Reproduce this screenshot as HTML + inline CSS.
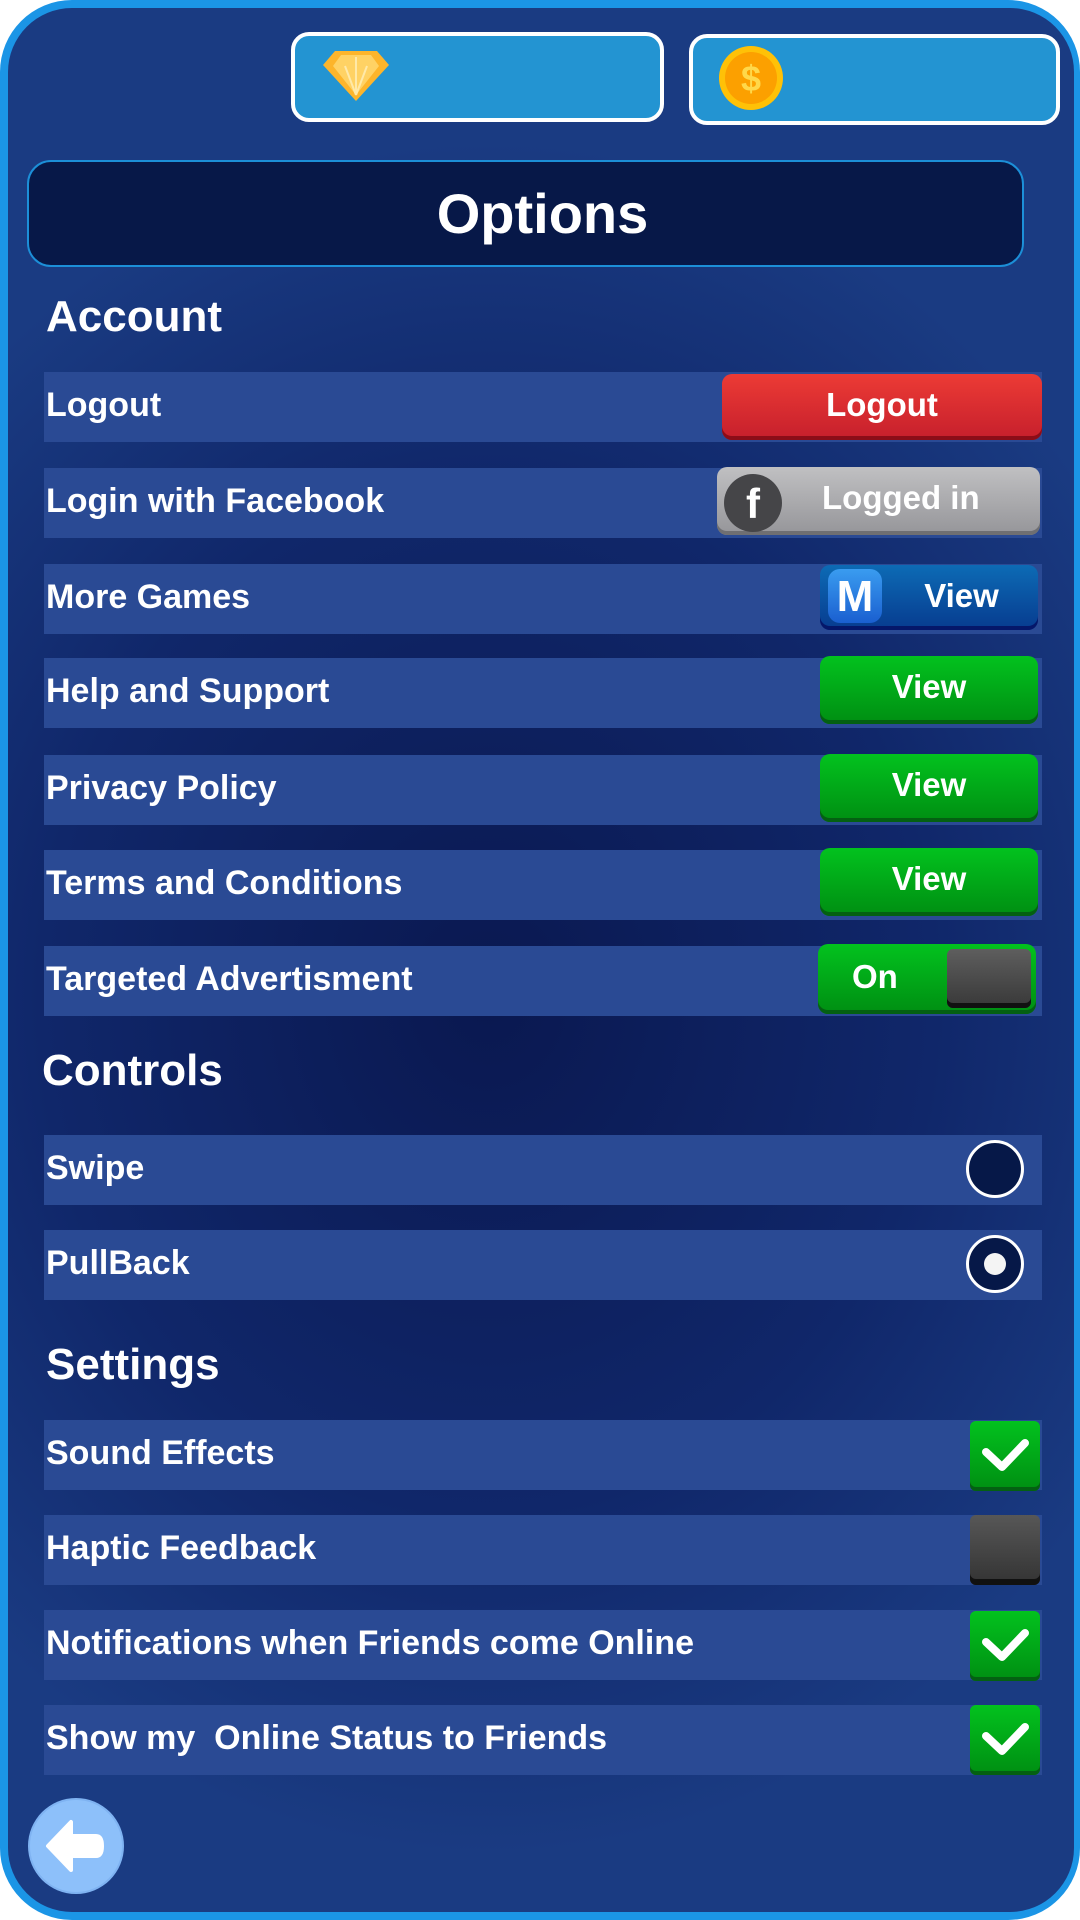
<!DOCTYPE html>
<html><head><meta charset="utf-8"><style>
*{margin:0;padding:0;box-sizing:border-box}
html,body{width:1080px;height:1920px;overflow:hidden}
body{background:#fff;position:relative;font-family:"Liberation Sans",sans-serif;font-weight:bold;color:#fff}
.frame{position:absolute;left:0;top:0;width:1080px;height:1920px;border-radius:72px;background:#1b95e6}
.inner{position:absolute;left:8px;top:8px;width:1066px;height:1904px;border-radius:64px;background:radial-gradient(ellipse 70% 45% at 45% 52%,#0a1850 0%,#10276a 60%,#1a3b82 100%)}
.pill{position:absolute;background:#2394d2;border:4px solid #fff;border-radius:18px}
.title{position:absolute;left:27px;top:160px;width:997px;height:107px;background:#071848;border:2px solid #1c8fd8;border-radius:24px;text-align:center;font-size:56px;line-height:103px;padding-left:34px}
.h{position:absolute;left:46px;font-size:44px}
.row{position:absolute;left:44px;width:998px;height:70px;background:#2a4a94}
.row span{position:absolute;left:2px;top:0;line-height:66px;font-size:34px}
.btn{position:absolute;border-radius:10px;text-align:center;font-size:33px;line-height:62px}
.red{background:linear-gradient(#ec3b35,#c61f2c);box-shadow:inset 0 -4px 0 #8c0d18}
.grey{background:linear-gradient(#c0c0c2,#959599);box-shadow:inset 0 -4px 0 #6f6f72}
.blue{background:linear-gradient(#0d6bb5,#073b8f);box-shadow:inset 0 -4px 0 #05176a}
.green{background:linear-gradient(#02c21e,#008e12);box-shadow:inset 0 -4px 0 #046012}
.radio{position:absolute;width:58px;height:58px;border-radius:50%;background:#061848;border:3px solid #fff}
.chk{position:absolute;left:970px;width:70px;height:70px;border-radius:6px}
.off{background:linear-gradient(#575757,#333);box-shadow:inset 0 -6px 0 #111}
</style></head><body>
<div class="frame"></div><div class="inner"></div>
<div class="pill" style="left:291px;top:32px;width:373px;height:90px"></div>
<svg style="position:absolute;left:323px;top:51px" width="66" height="50" viewBox="0 0 66 50"><polygon points="12,0 54,0 66,14 33,50 0,14" fill="#fdb52b"/><polygon points="18,4 48,4 56,15 33,44 10,15" fill="#ffd264"/><path d="M33 44 L22 15 M33 44 L44 15 M33 44 V6" stroke="#ffe9a8" stroke-width="2"/></svg>
<div class="pill" style="left:689px;top:34px;width:371px;height:91px"></div>
<svg style="position:absolute;left:717px;top:45px" width="68" height="66" viewBox="0 0 68 66"><ellipse cx="34" cy="33" rx="32" ry="32" fill="#ffc107"/><ellipse cx="34" cy="33" rx="26" ry="26" fill="#fca000"/><text x="34" y="46" text-anchor="middle" font-size="36" fill="#ffd84a" font-family="Liberation Sans">$</text></svg>
<div class="title">Options</div>
<div class="h" style="top:292px">Account</div>
<div class="row" style="top:372px"><span>Logout</span></div>
<div class="btn red" style="left:722px;top:374px;width:320px;height:66px">Logout</div>
<div class="row" style="top:468px"><span>Login with Facebook</span></div>
<div class="btn grey" style="left:717px;top:467px;width:323px;height:68px;text-align:left;padding-left:105px">Logged in</div>
<div style="position:absolute;left:724px;top:474px;width:58px;height:58px;border-radius:50%;background:#454548;font-size:42px;text-align:center;line-height:60px">f</div>
<div class="row" style="top:564px"><span>More Games</span></div>
<div class="btn blue" style="left:820px;top:565px;width:218px;height:65px;padding-left:65px">View</div>
<div style="position:absolute;left:828px;top:569px;width:54px;height:54px;border-radius:12px;background:linear-gradient(#3a9cf0,#1a5fd0);font-size:44px;line-height:56px;text-align:center">M</div>
<div class="row" style="top:658px"><span>Help and Support</span></div>
<div class="btn green" style="left:820px;top:656px;width:218px;height:68px">View</div>
<div class="row" style="top:755px"><span>Privacy Policy</span></div>
<div class="btn green" style="left:820px;top:754px;width:218px;height:68px">View</div>
<div class="row" style="top:850px"><span>Terms and Conditions</span></div>
<div class="btn green" style="left:820px;top:848px;width:218px;height:68px">View</div>
<div class="row" style="top:946px"><span>Targeted Advertisment</span></div>
<div class="btn green" style="left:818px;top:944px;width:218px;height:70px;text-align:left;padding-left:34px;line-height:66px">On</div>
<div style="position:absolute;left:947px;top:949px;width:84px;height:59px;border-radius:6px;background:linear-gradient(#5e5e5e,#383838);box-shadow:inset 0 -5px 0 #111"></div>
<div class="h" style="top:1046px;left:42px">Controls</div>
<div class="row" style="top:1135px"><span>Swipe</span></div>
<div class="radio" style="left:966px;top:1140px"></div>
<div class="row" style="top:1230px"><span>PullBack</span></div>
<div class="radio" style="left:966px;top:1235px"><div style="position:absolute;left:15px;top:15px;width:22px;height:22px;border-radius:50%;background:#f4f4f4"></div></div>
<div class="h" style="top:1340px">Settings</div>
<div class="row" style="top:1420px"><span>Sound Effects</span></div>
<div class="chk green" style="top:1421px"></div>
<div class="row" style="top:1515px"><span>Haptic Feedback</span></div>
<div class="chk off" style="top:1515px"></div>
<div class="row" style="top:1610px"><span>Notifications when Friends come Online</span></div>
<div class="chk green" style="top:1611px"></div>
<div class="row" style="top:1705px"><span>Show my&nbsp; Online Status to Friends</span></div>
<div class="chk green" style="top:1705px"></div>
<svg style="position:absolute;left:970px;top:1421px" width="70" height="360"><g fill="none" stroke="#fff" stroke-width="8" stroke-linecap="round" stroke-linejoin="round"><path d="M16 31 L32 46 L55 22"/><path d="M16 221 L32 236 L55 212"/><path d="M16 315 L32 330 L55 306"/></g></svg>
<svg style="position:absolute;left:26px;top:1796px" width="100" height="100" viewBox="0 0 100 100"><circle cx="50" cy="50" r="48" fill="#7fb3f2"/><circle cx="50" cy="50" r="46" fill="#8dc0fa"/><path d="M22 50 L45 26 L45 40 L70 40 Q76 40 76 50 Q76 60 70 60 L45 60 L45 74 Z" fill="#fff" stroke="#fff" stroke-width="4" stroke-linejoin="round"/></svg>
</body></html>
